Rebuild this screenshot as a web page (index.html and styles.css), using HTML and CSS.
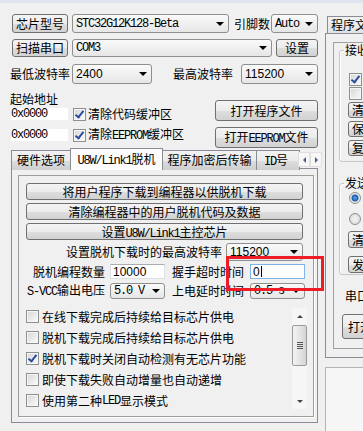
FILE: index.html
```html
<!DOCTYPE html>
<html>
<head>
    <meta charset="utf-8">
    <title>STC-ISP</title>
    <meta name="viewport" content="width=device-width, initial-scale=1">
    <link rel="stylesheet" href="styles.css">
</head>

<body>
    <div class="frame-top"></div>
    <div class="window">
        <div class="main">
            <div class="row row-chip">
                <button class="btn btn-side">芯片型号</button>
                <div class="combo combo-chip"><span class="sim">STC32G12K128-Beta</span><i class="arrow"></i></div>
                <span class="label label-pins">引脚数</span>
                <div class="combo combo-pins"><span class="sim">Auto</span><i class="arrow"></i></div>
            </div>
            <div class="row row-port">
                <button class="btn btn-side">扫描串口</button>
                <div class="combo combo-port"><span class="sim">COM3</span><i class="arrow"></i></div>
                <button class="btn btn-set">设置</button>
            </div>
            <div class="row row-baud">
                <span class="label label-baud">最低波特率</span>
                <div class="combo combo-min"><span class="num">2400</span><i class="arrow"></i></div>
                <span class="label label-max">最高波特率</span>
                <div class="combo combo-max"><span class="num">115200</span><i class="arrow"></i></div>
            </div>

            <div class="files">
                <div class="addr">
                    <div class="addr-title">起始地址</div>
                    <div class="addr-row">
                        <div class="textbox textbox-addr"><span class="sim">0x0000</span></div>
                        <span class="check checked"></span>
                        <span class="check-label">清除代码缓冲区</span>
                    </div>
                    <div class="addr-row addr-row-second">
                        <div class="textbox textbox-addr"><span class="sim">0x0000</span></div>
                        <span class="check checked"></span>
                        <span class="check-label">清除<span class="sim">EEPROM</span>缓冲区</span>
                    </div>
                </div>
                <div class="file-buttons">
                    <button class="btn btn-file">打开程序文件</button>
                    <button class="btn btn-file">打开<span class="sim">EEPROM</span>文件</button>
                </div>
            </div>

            <div class="tabs">
                <div class="tab tab-hw">硬件选项</div>
                <div class="tab tab-active"><span class="sim">U8W/Link1</span>脱机</div>
                <div class="tab tab-enc">程序加密后传输</div>
                <div class="tab tab-id"><span class="sim">ID</span>号</div>
                <div class="tab-spin">
                    <span class="spin-btn"><i class="tri-left"></i></span>
                    <span class="spin-btn"><i class="tri-right"></i></span>
                </div>
            </div>
            <div class="tab-page">
                <div class="group">
                    <button class="btn btn-wide">将用户程序下载到编程器以供脱机下载</button>
                    <button class="btn btn-wide">清除编程器中的用户脱机代码及数据</button>
                    <button class="btn btn-wide">设置<span class="sim">U8W/Link1</span>主控芯片</button>

                    <div class="field-baud">
                        <span class="label">设置脱机下载时的最高波特率</span>
                        <div class="combo combo-offline"><span class="num">115200</span><i class="arrow"></i></div>
                    </div>
                    <div class="field-row">
                        <span class="label field-label">脱机编程数量</span>
                        <div class="textbox field-input"><span class="num">10000</span></div>
                        <span class="label field-label-right">握手超时时间</span>
                        <div class="textbox field-input field-input-right focused"><span class="num">0</span><span class="caret"></span></div>
                    </div>
                    <div class="field-row field-row-power">
                        <span class="label field-label"><span class="sim">S-VCC</span>输出电压</span>
                        <div class="combo field-input"><span class="sim">5.0 V</span><i class="arrow"></i></div>
                        <span class="label field-label-right">上电延时时间</span>
                        <div class="combo field-input field-input-right"><span class="sim">0.5 s</span><i class="arrow"></i></div>
                    </div>

                    <div class="options">
                        <div class="option-list">
                            <div class="option"><span class="check"></span>在线下载完成后持续给目标芯片供电</div>
                            <div class="option"><span class="check"></span>脱机下载完成后持续给目标芯片供电</div>
                            <div class="option"><span class="check checked"></span>脱机下载时关闭自动检测有无芯片功能</div>
                            <div class="option"><span class="check"></span>即使下载失败自动增量也自动递增</div>
                            <div class="option"><span class="check"></span>使用第二种<span class="sim">LED</span>显示模式</div>
                        </div>
                        <div class="scrollbar">
                            <div class="scroll-arrow"><i class="tri-up"></i></div>
                            <div class="scroll-thumb"><i class="grip"></i></div>
                            <div class="scroll-track"></div>
                            <div class="scroll-arrow"><i class="tri-down"></i></div>
                        </div>
                    </div>
                </div>
            </div>
        </div>

        <div class="side">
            <div class="side-tab">程序文件</div>
            <div class="side-page">
                <div class="side-inner">
                    <fieldset class="side-group side-group-rx">
                        <legend>接收缓冲区</legend>
                        <span class="check checked side-check"></span>
                        <span class="check side-check side-check-second"></span>
                        <button class="btn side-btn side-btn-first">清空</button>
                        <button class="btn side-btn">保存</button>
                        <button class="btn side-btn side-btn-last">复制</button>
                    </fieldset>
                    <fieldset class="side-group side-group-tx">
                        <legend>发送缓冲区</legend>
                        <span class="radio on"></span>
                        <span class="radio radio-second"></span>
                        <button class="btn side-btn side-btn-tx">清空</button>
                        <button class="btn side-btn side-btn-send">发送</button>
                    </fieldset>
                    <div class="side-label">串口</div>
                    <button class="btn side-open">打开串口</button>
                </div>
            </div>
            <div class="side-lower"></div>
        </div>
    </div>

    <div class="highlight"></div>
</body>
</html>
```

FILE: styles.css
```css
html,
body {
    height: 431px;
    overflow: hidden;
}

body {
    margin: 0;
    background-color: #f0f0f0;
    font-family: "Noto Sans CJK SC", sans-serif;
    font-size: 12px;
    line-height: 14px;
    color: #000;
}

.sim {
    font-family: "Liberation Mono", "Noto Sans CJK SC", monospace;
    font-size: 12px;
    letter-spacing: -1.2px;
}

.num {
    font-family: "Liberation Sans", sans-serif;
    font-size: 12px;
}

.frame-top {
    height: 3px;
    background-color: #dfe5ee;
}

.window {
    display: flex;
}

.main {
    flex: none;
    width: 325px;
    box-sizing: border-box;
    padding-left: 10px;
}

/* shared controls */

.btn {
    box-sizing: border-box;
    padding: 0;
    border: 1px solid #707070;
    border-radius: 3px;
    background: linear-gradient(#f4f4f4 0%, #ececec 50%, #dedede 51%, #d2d2d2 100%);
    font: inherit;
    line-height: 14px;
    color: #000;
    white-space: nowrap;
}

.combo {
    box-sizing: border-box;
    display: flex;
    align-items: center;
    justify-content: space-between;
    padding: 0 4px 0 3px;
    border: 1px solid #8f8f8f;
    border-radius: 3px;
    background: linear-gradient(#fafafa, #e6e6e6);
    white-space: nowrap;
}

.arrow {
    flex: none;
    width: 0;
    height: 0;
    border-left: 4px solid transparent;
    border-right: 4px solid transparent;
    border-top: 4px solid #000;
}

.textbox {
    box-sizing: border-box;
    display: flex;
    align-items: center;
    padding-left: 2px;
    background-color: #fff;
    border: 1px solid #dcdfe3;
    border-top-color: #abadb3;
}

.textbox.focused {
    border-color: #7eb4ea;
}

.caret {
    width: 1px;
    height: 11px;
    margin-left: 1px;
    background-color: #000;
}

.label {
    white-space: nowrap;
}

.check {
    flex: none;
    position: relative;
    display: inline-block;
    box-sizing: border-box;
    width: 13px;
    height: 13px;
    border: 1px solid #8e8f8f;
    background: linear-gradient(135deg, #d6d6d6, #fbfbfb);
    box-shadow: inset 0 0 0 1px #f6f6f6;
}

.check.checked::after {
    content: "";
    position: absolute;
    left: 3px;
    top: 0;
    width: 3px;
    height: 7px;
    border: solid #2c4c9c;
    border-width: 0 2px 2px 0;
    transform: rotate(38deg);
}

.radio {
    display: block;
    box-sizing: border-box;
    width: 12px;
    height: 12px;
    border: 1px solid #8e8f8f;
    border-radius: 50%;
    background: radial-gradient(circle, #f6f6f6, #d3d3d3);
}

.radio.on {
    background: radial-gradient(circle, #58a6ee 0, #1d5fb0 3px, #e4e4e4 4px, #f4f4f4 6px);
}

/* top rows */

.row {
    display: flex;
    align-items: center;
}

.row > .btn,
.row > .combo {
    height: 100%;
}

.row-chip {
    margin-top: 11px;
    height: 19px;
}

.btn-side {
    margin-left: 2px;
    width: 56px;
}

.combo-chip {
    margin-left: 4px;
    width: 157px;
}

.label-pins {
    margin-left: 5px;
    width: 36px;
}

.combo-pins {
    margin-left: 1px;
    width: 47px;
}

.row-port {
    margin-top: 6px;
    height: 18px;
}

.combo-port {
    margin-left: 4px;
    width: 200px;
}

.btn-set {
    margin-left: 4px;
    width: 42px;
}

.row-baud {
    margin-top: 7px;
    height: 20px;
}

.label-baud {
    width: 60px;
}

.combo-min {
    margin-left: 2px;
    width: 80px;
}

.label-max {
    margin-left: 21px;
    width: 60px;
}

.combo-max {
    margin-left: 8px;
    width: 77px;
}

/* address and file buttons */

.files {
    display: flex;
    margin-top: 8px;
}

.addr {
    width: 205px;
}

.addr-title {
    height: 14px;
}

.addr-row {
    display: flex;
    align-items: center;
    height: 14px;
    margin-top: 1px;
}

.addr-row-second {
    margin-top: 7px;
}

.textbox-addr {
    width: 59px;
    height: 14px;
    padding-left: 0;
    border-color: #f0f0f0;
}

.addr-row .check {
    margin-left: 4px;
}

.check-label {
    margin-left: 2px;
    white-space: nowrap;
}

.file-buttons {
    display: flex;
    flex-direction: column;
    gap: 6px;
    margin-top: 8px;
}

.btn-file {
    width: 103px;
    height: 21px;
}

/* tabs */

.tabs {
    display: flex;
    align-items: flex-end;
    height: 22px;
    margin-left: 1px;
}

.tab {
    box-sizing: border-box;
    height: 20px;
    margin-left: -1px;
    border: 1px solid #898c95;
    border-bottom: none;
    background: linear-gradient(#f2f2f2 0%, #ebebeb 50%, #dddddd 51%, #cfcfcf 100%);
    text-align: center;
    line-height: 17px;
    white-space: nowrap;
    overflow: hidden;
}

.tab-hw {
    margin-left: 0;
    width: 60px;
}

.tab-active {
    position: relative;
    z-index: 1;
    width: 93px;
    height: 22px;
    line-height: 19px;
    background: #fcfcfc;
}

.tab-enc {
    width: 95px;
}

.tab-id {
    width: 44px;
    text-align: left;
    padding-left: 7px;
}

.tab-spin {
    position: relative;
    z-index: 2;
    align-self: flex-start;
    display: flex;
    margin-top: 4px;
    margin-left: -2px;
    height: 15px;
}

.spin-btn {
    display: flex;
    align-items: center;
    justify-content: center;
    box-sizing: border-box;
    width: 12px;
    height: 15px;
    background-color: #f7f7f7;
    border: 1px solid #e0e0e0;
}

.tri-left {
    border-top: 3px solid transparent;
    border-bottom: 3px solid transparent;
    border-right: 3px solid #4a5c8c;
}

.tri-right {
    border-top: 3px solid transparent;
    border-bottom: 3px solid transparent;
    border-left: 3px solid #4a5c8c;
}

.tab-page {
    box-sizing: border-box;
    width: 307px;
    height: 255px;
    margin-top: -2px;
    margin-left: 1px;
    padding: 6px 3px 5px 6px;
    border: 1px solid #898c95;
    background-color: #f0f0f0;
}

.group {
    box-sizing: border-box;
    width: 296px;
    height: 242px;
    padding: 7px 0 0 7px;
    border: 1px solid #9c9c9c;
    box-shadow: 1px 1px 0 #fff;
}

.btn-wide {
    display: block;
    width: 277px;
    height: 17px;
    margin-bottom: 3px;
    line-height: 15px;
}

.field-baud {
    display: flex;
    align-items: center;
    justify-content: flex-end;
    width: 277px;
    height: 18px;
    margin-top: 2px;
}

.combo-offline {
    margin-left: 4px;
    width: 77px;
    height: 18px;
}

.field-row {
    display: flex;
    align-items: center;
    height: 15px;
    margin-top: 3px;
}

.field-row-power {
    height: 16px;
    margin-top: 4px;
}

.field-label {
    width: 79px;
    text-align: right;
}

.field-input {
    width: 55px;
    height: 100%;
    margin-left: 5px;
}

.field-label-right {
    width: 72px;
    margin-left: 7px;
    text-align: right;
}

.field-input-right {
    margin-left: 6px;
}

/* option list */

.options {
    display: flex;
    height: 105px;
    margin-top: 7px;
}

.option-list {
    width: 266px;
}

.option {
    display: flex;
    align-items: center;
    height: 21px;
    white-space: nowrap;
}

.option .check {
    margin-right: 3px;
}

.scrollbar {
    display: flex;
    flex-direction: column;
    width: 15px;
    height: 101px;
    margin-top: 2px;
    background-color: #f6f6f6;
}

.scroll-arrow {
    display: flex;
    align-items: center;
    justify-content: center;
    height: 16px;
}

.tri-up {
    border-left: 3px solid transparent;
    border-right: 3px solid transparent;
    border-bottom: 3px solid #444;
}

.tri-down {
    border-left: 3px solid transparent;
    border-right: 3px solid transparent;
    border-top: 3px solid #444;
}

.scroll-thumb {
    display: flex;
    align-items: center;
    justify-content: center;
    box-sizing: border-box;
    height: 41px;
    margin-top: 1px;
    border: 1px solid #9a9a9a;
    border-radius: 2px;
    background: linear-gradient(90deg, #f3f3f3, #e2e2e2 60%, #d4d4d4);
}

.grip {
    width: 6px;
    height: 7px;
    background: repeating-linear-gradient(#555 0 1px, transparent 1px 2px);
}

.scroll-track {
    flex: 1;
}

/* right panel */

.side {
    flex: 1;
    overflow: hidden;
    padding-top: 13px;
}

.side-tab {
    box-sizing: border-box;
    width: 64px;
    height: 17px;
    margin-left: 2px;
    padding-left: 3px;
    border: 1px solid #898c95;
    border-bottom: none;
    background: linear-gradient(#f2f2f2, #e2e2e2);
    line-height: 16px;
    white-space: nowrap;
}

.side-page {
    box-sizing: border-box;
    width: 70px;
    height: 325px;
    padding: 8px 0 0 7px;
    border: 1px solid #898c95;
}

.side-inner {
    box-sizing: border-box;
    width: 70px;
    height: 307px;
    padding-left: 5px;
    border: 1px solid #a0a0a0;
}

.side-group {
    box-sizing: border-box;
    width: 70px;
    margin: 0;
    padding: 0 0 0 9px;
    border: 1px solid #c8c8c8;
    border-radius: 3px;
    box-shadow: inset 1px 1px 0 #fff;
}

.side-group legend {
    margin-left: -5px;
    padding: 0 1px;
    line-height: 14px;
    white-space: nowrap;
}

.side-group-rx {
    padding-bottom: 5px;
}

.side-check {
    display: block;
    margin-top: 16px;
}

.side-check-second {
    margin-top: 1px;
}

.side-btn {
    display: block;
    width: 40px;
    height: 16px;
    margin-top: 3px;
    margin-left: -1px;
    text-align: left;
    padding-left: 3px;
    line-height: 14px;
}

.side-btn-first {
    margin-top: 2px;
}

.side-group-tx {
    margin-top: 14px;
    padding-bottom: 1px;
}

.side-group-tx .radio {
    margin-top: 2px;
}

.side-group-tx .radio-second {
    margin-top: 9px;
}

.side-btn-tx {
    height: 17px;
    margin-top: 6px;
}

.side-btn-send {
    height: 17px;
    margin-top: 8px;
}

.side-label {
    margin-top: 14px;
    margin-left: 6px;
    white-space: nowrap;
}

.side-open {
    display: block;
    width: 60px;
    height: 25px;
    margin-top: 11px;
    margin-left: 3px;
    padding-left: 5px;
    text-align: left;
}

.side-lower {
    box-sizing: border-box;
    width: 70px;
    height: 80px;
    margin-top: 9px;
    border: 1px solid #b4b4b4;
    background-color: #f6f6f6;
}

/* red marker drawn over the screenshot */

.highlight {
    position: absolute;
    left: 226px;
    top: 256px;
    width: 98px;
    height: 35px;
    box-sizing: border-box;
    border: 3px solid #ee1c25;
}
```
